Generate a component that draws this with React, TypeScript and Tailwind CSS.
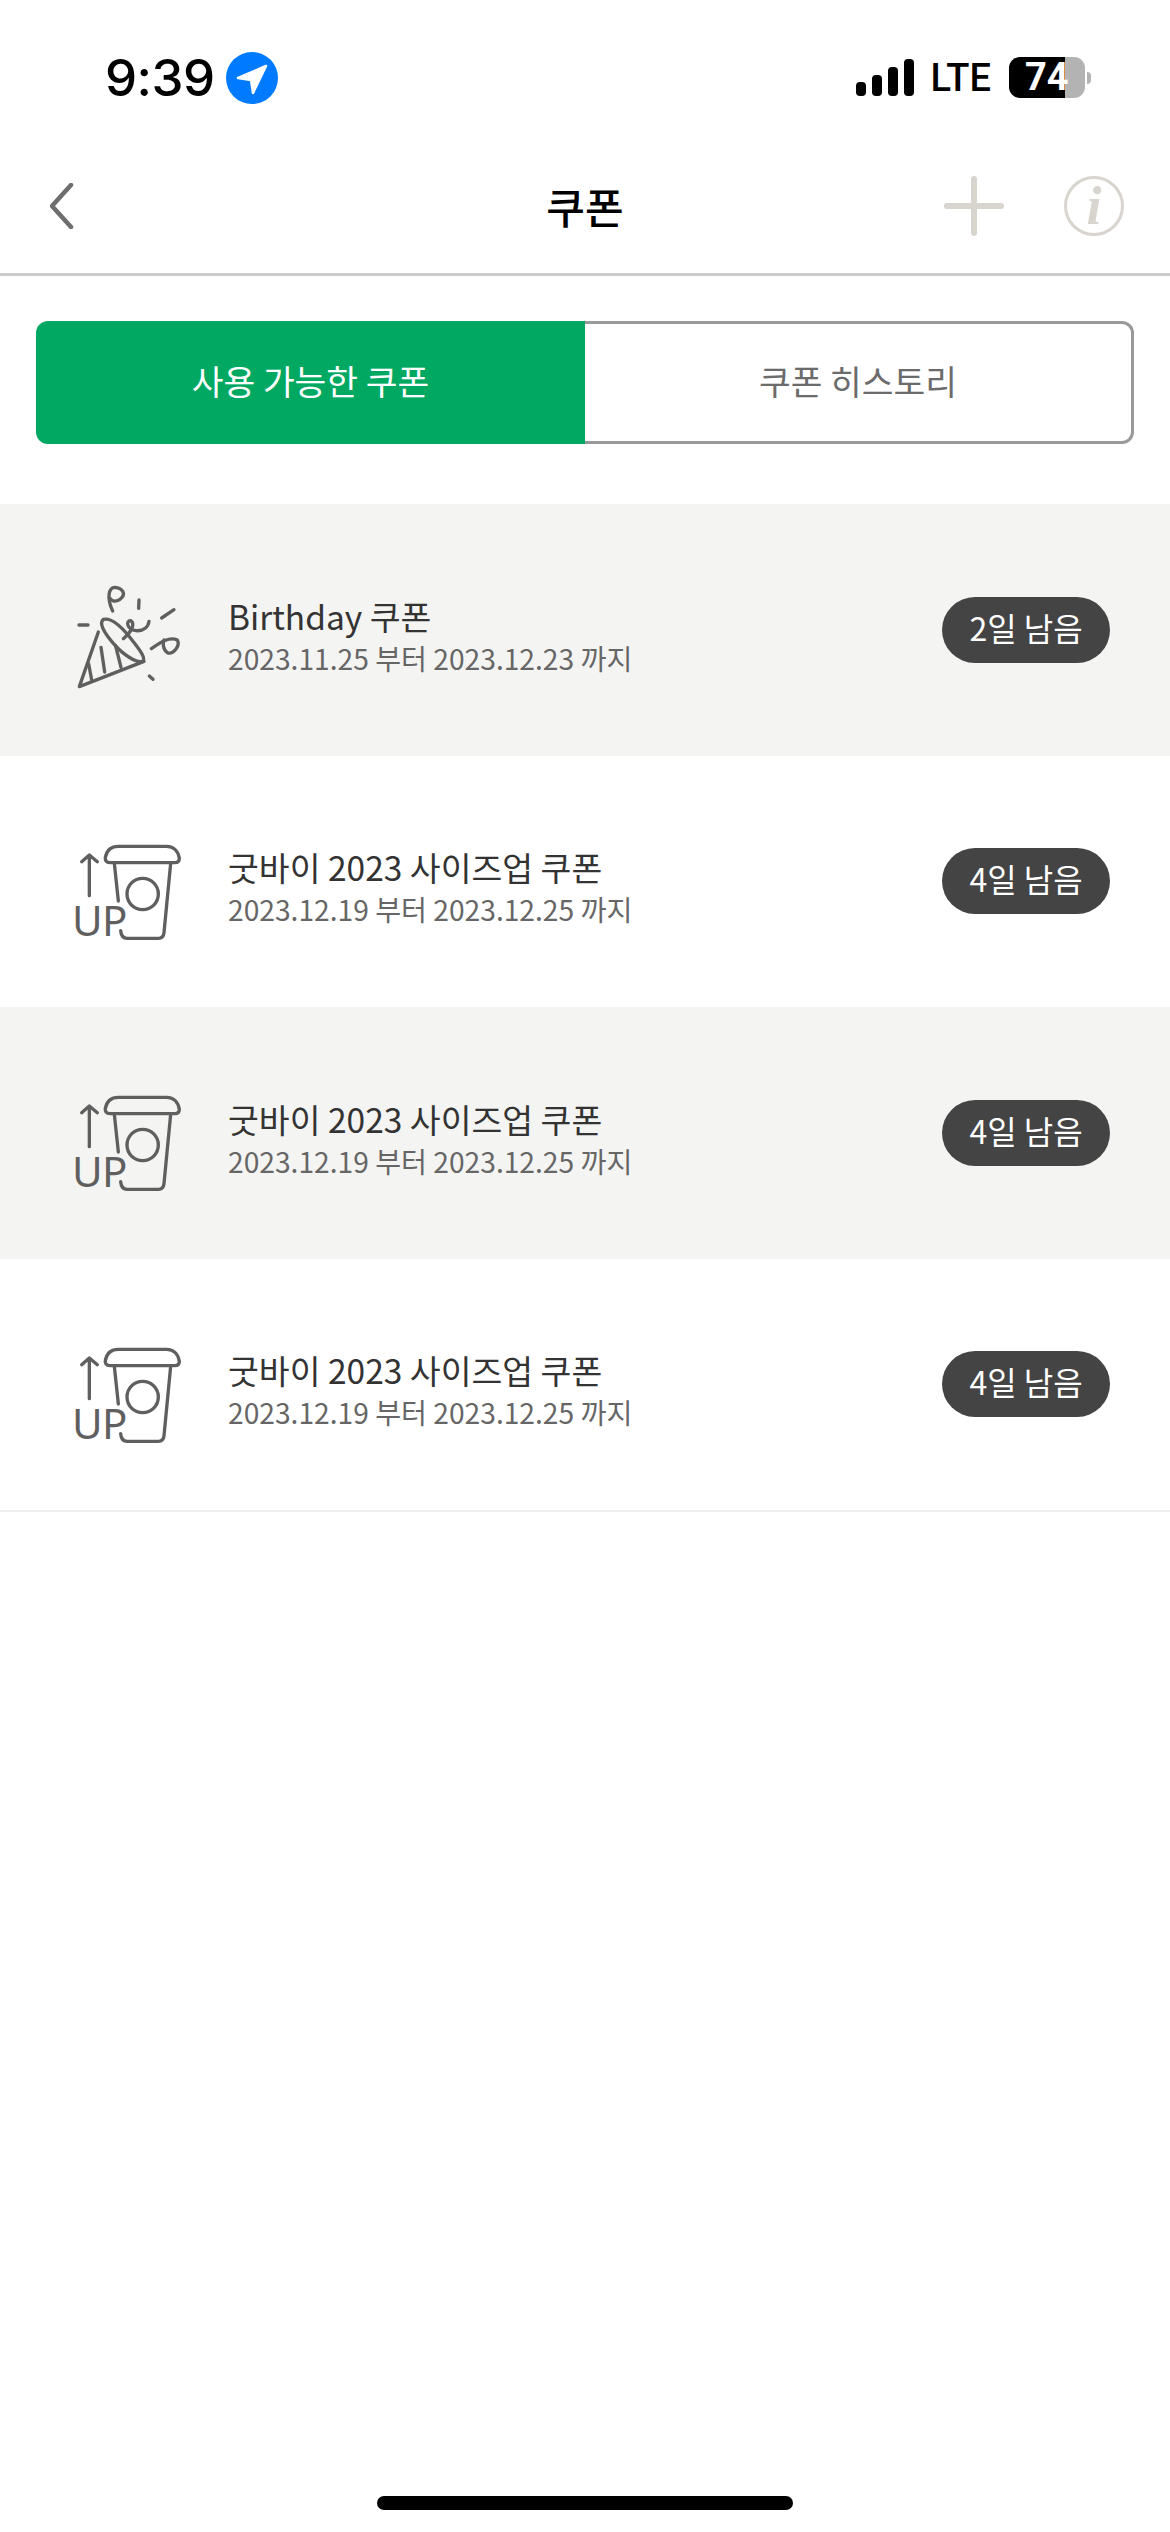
const coupons = [
  { id: 1, icon: "party", title: "Birthday 쿠폰", period: "2023.11.25 부터 2023.12.23 까지", left: "2일 남음", tinted: true },
  { id: 2, icon: "cup", title: "굿바이 2023 사이즈업 쿠폰", period: "2023.12.19 부터 2023.12.25 까지", left: "4일 남음", tinted: false },
  { id: 3, icon: "cup", title: "굿바이 2023 사이즈업 쿠폰", period: "2023.12.19 부터 2023.12.25 까지", left: "4일 남음", tinted: true },
  { id: 4, icon: "cup", title: "굿바이 2023 사이즈업 쿠폰", period: "2023.12.19 부터 2023.12.25 까지", left: "4일 남음", tinted: false },
];

const PartyIcon = () => (
  <svg width="160" height="130" viewBox="0 0 480 390" fill="none" stroke="#5f5f5f" strokeWidth="10" strokeLinecap="round" strokeLinejoin="round" className="ml-[40px] mb-[10px] shrink-0">
    {/* cone */}
    <path d="M175 216 L118 380 L312 304" />
    <path d="M190 178 C215 172 250 205 280 245 C300 270 318 295 308 304 C290 310 250 285 220 250 C195 222 175 190 190 178 Z" />
    <path d="M146 312 L155 360 M183 262 L194 336 M227 258 L243 322" />
    {/* streamers */}
    <path d="M218 153 C200 115 205 82 225 82 C245 84 262 100 240 118 C225 128 212 122 208 112" />
    <path d="M250 236 C272 218 288 192 272 182 C258 180 258 208 288 212 C312 214 325 200 327 184" />
    <path d="M334 266 C355 252 385 228 412 240 C422 258 398 285 382 278 C368 268 368 248 372 240" />
    {/* confetti */}
    <path d="M117 195 L144 195 M297 120 L296 145 M365 174 L402 149 M328 348 L339 358" />
  </svg>
);

const CupIcon = () => (
  <svg width="160" height="130" viewBox="0 0 480 390" fill="none" stroke="#5f5f5f" strokeWidth="10" strokeLinecap="round" strokeLinejoin="round" className="ml-[50px] mt-[7px] shrink-0">
    <path d="M180 128 C168 128 165 120 166 112 C170 92 182 79 205 79 L350 79 C372 79 385 95 388 115 C388 124 384 128 375 128 Z" />
    <path d="M193 130 L205 243" />
    <path d="M362 130 L342 338 C341 350 335 355 325 355 L232 355 C220 355 213 348 212 332" />
    <circle cx="278" cy="222" r="47" />
    <path d="M118 227 L118 106 M95 125 L118 105 L142 125" />
    <text x="66" y="349" fontSize="126" fontFamily="Noto Sans, sans-serif" fontWeight="400" fill="#5f5f5f" stroke="none" letterSpacing="-2">UP</text>
  </svg>
);

const StatusBar = () => (
  <div className="h-[136px] flex items-start justify-between pl-[105px] pr-[79px] pt-[52px] shrink-0">
    <div className="flex items-center gap-[11px]">
      <span className="font-['Inter',sans-serif] text-[51px] leading-[52px] font-medium text-black tracking-[-0.5px]">9:39</span>
      <svg width="52" height="52" viewBox="0 0 52 52">
        <circle cx="26" cy="26" r="26" fill="#007aff" />
        <path d="M40 14 L12 26 L25 28 L27 41 Z" fill="#fff" stroke="#fff" strokeWidth="2.5" strokeLinejoin="round" />
      </svg>
    </div>
    <div className="flex items-center gap-[18px] mt-[5px]">
      <div className="flex items-end gap-[6px] h-[37px] -mr-[2px]">
        <div className="w-[10px] h-[14px] rounded-[4px] bg-black" />
        <div className="w-[10px] h-[21px] rounded-[4px] bg-black" />
        <div className="w-[10px] h-[29px] rounded-[4px] bg-black" />
        <div className="w-[10px] h-[37px] rounded-[4px] bg-black" />
      </div>
      <span className="font-['Roboto',sans-serif] font-medium text-[38px] leading-[40px] text-black">LTE</span>
      <div className="flex items-center gap-[2px]">
        <div className="relative w-[76px] h-[41px] flex">
          <div className="w-[56px] rounded-l-[11px] bg-black" />
          <div className="flex-1 rounded-r-[11px] bg-[#b3b3b3]" />
          <span className="absolute left-[16px] top-0 font-['Roboto',sans-serif] font-bold text-[38px] leading-[41px] text-white">74</span>
        </div>
        <div className="w-[4px] h-[12px] rounded-r-full bg-[#b3b3b3]" />
      </div>
    </div>
  </div>
);

const NavBar = () => (
  <div className="h-[140px] border-b-[3px] border-[#cccccc] flex items-center justify-between pl-[50px] pr-[46px] pt-[2px] shrink-0 relative">
    <svg width="24" height="46" viewBox="0 0 24 46" fill="none" stroke="#6e6e6e" strokeWidth="4.5" strokeLinecap="round" strokeLinejoin="round">
      <path d="M21 2 L2 23 L21 44" />
    </svg>
    <h1 className="absolute left-0 right-0 text-center text-[42px] leading-[48px] font-medium text-black">쿠폰</h1>
    <div className="flex items-center gap-[60px]">
      <svg width="60" height="60" viewBox="0 0 60 60" stroke="#d8d4ce" strokeWidth="6" strokeLinecap="round">
        <path d="M3 30 L57 30 M30 3 L30 57" />
      </svg>
      <div className="w-[60px] h-[60px] rounded-full border-[3px] border-[#d8d4ce] flex items-center justify-center">
        <span className="font-['Liberation_Serif',serif] italic font-bold text-[54px] leading-[54px] text-[#d8d4ce]">i</span>
      </div>
    </div>
  </div>
);

export default function App() {
  return (
    <div className="w-[1170px] min-h-[2532px] bg-white flex flex-col font-['Noto_Sans_CJK_KR','Noto_Sans',sans-serif]">
      <StatusBar />
      <NavBar />

      {/* Tabs */}
      <div className="flex h-[123px] mx-[36px] mt-[45px] mb-[60px] shrink-0">
        <div className="w-[549px] pb-[3px] rounded-l-[12px] bg-[#00a862] flex items-center justify-center text-[34.5px] text-white">
          사용 가능한 쿠폰
        </div>
        <div className="flex-1 pb-[3px] rounded-r-[12px] border-[3px] border-l-0 border-[#999999] flex items-center justify-center text-[34.5px] text-[#6b6b6b]">
          쿠폰 히스토리
        </div>
      </div>

      {/* Coupon list */}
      <div className="border-b-2 border-[#eeeeee]">
        {coupons.map((coupon) => (
          <div key={coupon.id} className={`h-[251.5px] flex items-center pr-[60px] ${coupon.tinted ? "bg-[#f4f4f2]" : "bg-white"}`}>
            {coupon.icon === "party" ? <PartyIcon /> : <CupIcon />}
            <div className={`flex-1 flex flex-col pt-[10px] ${coupon.icon === "party" ? "ml-[28px]" : "ml-[18px]"}`}>
              <div className="text-[33.5px] leading-[46px] text-[#333333]">{coupon.title}</div>
              <div className="text-[28.2px] leading-[38px] text-[#666666]">{coupon.period}</div>
            </div>
            <div className="w-[168px] h-[66px] pb-[6px] rounded-full bg-[#444444] flex items-center justify-center text-[32px] text-white">
              {coupon.left}
            </div>
          </div>
        ))}
      </div>

      {/* Home indicator */}
      <div className="mt-auto mb-[22px] flex justify-center">
        <div className="w-[416px] h-[14px] rounded-full bg-black" />
      </div>
    </div>
  );
}
